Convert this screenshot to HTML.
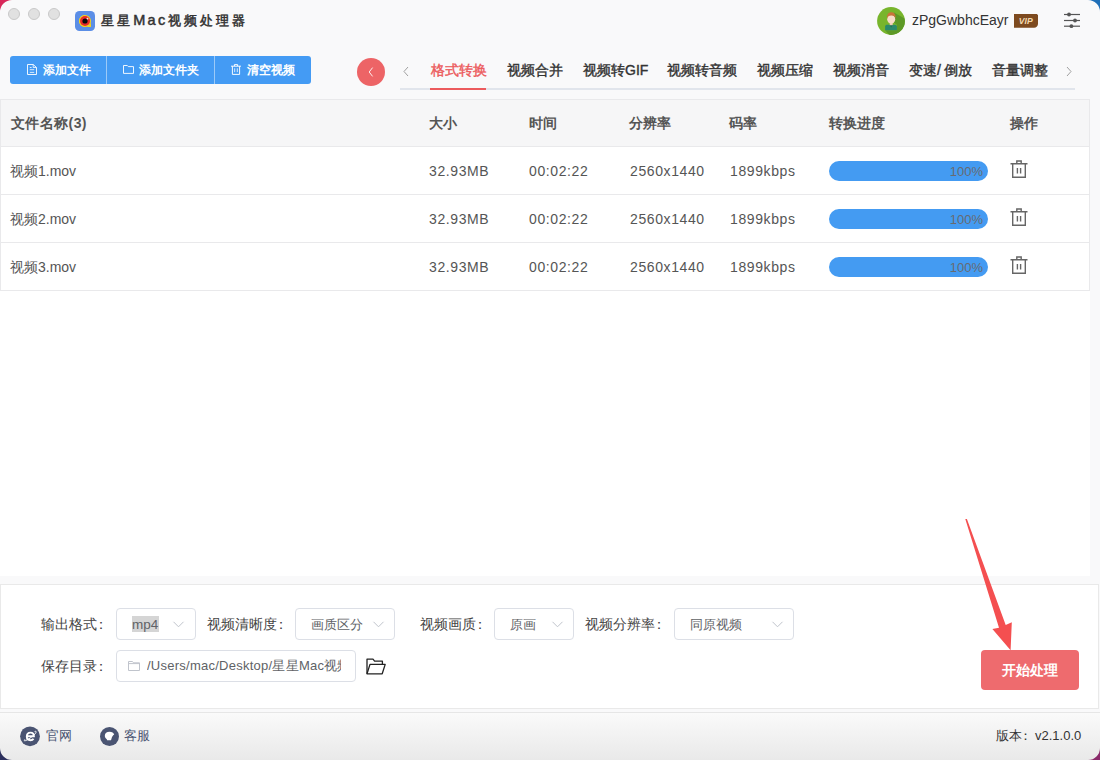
<!DOCTYPE html>
<html><head><meta charset="utf-8">
<style>
*{margin:0;padding:0;box-sizing:border-box;}
html,body{width:1100px;height:760px;overflow:hidden;background:#f9f9fa;}
body{font-family:"Liberation Sans",sans-serif;position:relative;color:#333;}
.abs{position:absolute;}
svg{position:absolute;display:block;overflow:visible;}
.win{position:absolute;left:0;top:0;width:1100px;height:760px;background:#f9f9fa;overflow:hidden;}
.tl{position:absolute;top:8px;width:12px;height:12px;border-radius:50%;background:#e1e1e1;border:1px solid #c9c9c9;}
.t{position:absolute;white-space:nowrap;line-height:20px;}
.title{left:101px;top:10px;font-size:13px;letter-spacing:3.1px;color:#333;-webkit-text-stroke:0.5px;}
.btngrp{position:absolute;left:10px;top:56px;width:301px;height:28px;background:#449bf4;border-radius:3px;}
.btn{position:absolute;top:4px;color:#fff;font-size:12px;font-weight:bold;line-height:20px;white-space:nowrap;}
.sep{position:absolute;top:0;width:1px;height:28px;background:#9ccaf8;}
.tab{position:absolute;top:60px;font-size:14px;color:#333;-webkit-text-stroke:0.4px;line-height:20px;white-space:nowrap;}
.hdr{position:absolute;top:99px;left:0;width:1090px;height:48px;background:#f6f6f7;border:1px solid #e9e9eb;}
.row{position:absolute;left:0;width:1090px;height:48px;background:#fff;border-left:1px solid #e9e9eb;border-right:1px solid #e9e9eb;border-bottom:1px solid #e9e9eb;}
.cell{position:absolute;top:14px;font-size:14px;line-height:20px;color:#555;white-space:nowrap;}
.num{letter-spacing:0.6px;}
.hcell{position:absolute;top:13px;font-size:14px;font-weight:bold;line-height:20px;color:#555;white-space:nowrap;}
.prog{position:absolute;left:828px;top:14px;width:159px;height:20px;border-radius:10px;background:#449bf2;}
.prog span{position:absolute;right:5px;top:1.5px;font-size:13px;line-height:18px;color:#676b72;}
.lbl{position:absolute;font-size:14px;color:#444;line-height:20px;white-space:nowrap;}
.sel{position:absolute;height:32px;border:1px solid #dcdfe6;border-radius:4px;background:#fff;}
.sel span{position:absolute;left:15px;top:6px;font-size:13px;color:#606266;line-height:20px;white-space:nowrap;}
</style></head>
<body>
<div class="win">
  <!-- traffic lights -->
  <div class="tl" style="left:8px"></div>
  <div class="tl" style="left:28px"></div>
  <div class="tl" style="left:48px"></div>

  <!-- app icon -->
  <svg style="left:75px;top:11px" width="20" height="20" viewBox="0 0 20 20">
    <rect x="0" y="0" width="20" height="20" rx="4.5" fill="#5b8ee6"/>
    <path d="M10 4A6 6 0 1 0 16 10V16H10Z" fill="#f3d21c"/>
    <circle cx="10" cy="10" r="6" fill="#f3d21c"/>
    <circle cx="10" cy="10" r="5" fill="#e82a2a"/>
    <circle cx="10" cy="10" r="2.6" fill="#0a0a0a"/>
    <circle cx="12.5" cy="7.6" r="0.9" fill="#f0f0f0"/>
  </svg>
  <div class="t title">星星<span style="font-size:14.5px;letter-spacing:2.3px">Mac</span>视频处理器</div>

  <!-- right header -->
  <svg style="left:877px;top:7px" width="28" height="28" viewBox="0 0 28 28">
    <defs><clipPath id="avc"><circle cx="14" cy="14" r="13.9"/></clipPath></defs>
    <circle cx="14" cy="14" r="13.9" fill="#78b52c"/>
    <g clip-path="url(#avc)">
      <path d="M17 5.5L30 13L30 30L14 30L8.2 23.3H19.9V17.8L16 15Z" fill="#5d9926"/>
      <path d="M8.1 23.3V19.4C8.1 18.4 9 17.8 10.5 17.8H17.5C19 17.8 19.9 18.4 19.9 19.4V23.3Z" fill="#2a8a6c"/>
      <path d="M12.4 17.8L14.2 20.4L16 17.8Z" fill="#1f6f57"/>
      <rect x="12.7" y="15" width="3" height="3.2" fill="#f0cdb2"/>
      <ellipse cx="14.2" cy="12.2" rx="4" ry="4.4" fill="#f8dcc8"/>
      <path d="M10 11.5C9.6 7.2 11.6 5.2 14.3 5.2C17 5.2 19 7.2 18.6 11.5C18 9.6 16.8 8.6 14.3 8.6C11.8 8.6 10.6 9.6 10 11.5Z" fill="#c8743a"/>
    </g>
  </svg>
  <div class="t" style="left:912px;top:10px;font-size:14px;color:#333;">zPgGwbhcEayr</div>
  <svg style="left:1014px;top:14px" width="25" height="14" viewBox="0 0 25 14">
    <path d="M0 0H23.5L24 1V9.5A4 4 0 0 1 20 13.8H0Z" fill="#7d4a1f"/>
    <path d="M23 0H25V2Z" fill="#f9f9fa"/>
    <text x="11.8" y="10.2" text-anchor="middle" font-family="Liberation Sans" font-size="8.6" font-weight="bold" font-style="italic" fill="#f5dcb0">VIP</text>
  </svg>
  <svg style="left:1063px;top:11px" width="18" height="18" viewBox="0 0 18 18">
    <g stroke="#555" stroke-width="1.2" fill="#555">
      <line x1="1" y1="3.5" x2="17" y2="3.5"/><circle cx="6" cy="3.5" r="1.9" stroke="none"/>
      <line x1="1" y1="9.5" x2="17" y2="9.5"/><circle cx="12" cy="9.5" r="1.9" stroke="none"/>
      <line x1="1" y1="15.2" x2="17" y2="15.2"/><circle cx="8.4" cy="15.2" r="1.9" stroke="none"/>
    </g>
  </svg>

  <!-- toolbar -->
  <div class="btngrp">
    <svg style="left:17px;top:8px" width="10" height="11" viewBox="0 0 10 11">
      <path d="M0.5 0.5H6.2L9.5 3.5V10.5H0.5Z" fill="none" stroke="#fff" stroke-width="0.9" stroke-linejoin="round"/>
      <path d="M6.2 0.6V3.5H9.4" fill="none" stroke="#fff" stroke-width="0.8"/>
      <path d="M2.8 3.5H4.6M2.8 5.7H7.2M2.8 8.4H7.2" stroke="#fff" stroke-width="0.8"/>
    </svg>
    <div class="btn" style="left:33px">添加文件</div>
    <div class="sep" style="left:96px"></div>
    <svg style="left:113px;top:9px" width="11" height="9" viewBox="0 0 11 9">
      <path d="M0.5 0.5H4.3L5.3 1.6H10.5V8.4H0.5Z" fill="none" stroke="#fff" stroke-width="0.9" stroke-linejoin="round"/>
    </svg>
    <div class="btn" style="left:129px">添加文件夹</div>
    <div class="sep" style="left:204px"></div>
    <svg style="left:221px;top:8px" width="10" height="11" viewBox="0 0 10 11">
      <path d="M0 2.2H10M3.4 2.2V0.6H6.6V2.2M1.4 2.2V10.4H8.6V2.2" fill="none" stroke="#fff" stroke-width="0.95"/><path d="M3.7 4.3V8.1M6.3 4.3V8.1" fill="none" stroke="#fff" stroke-width="0.8"/>
    </svg>
    <div class="btn" style="left:237px">清空视频</div>
  </div>

  <!-- back circle -->
  <svg style="left:357px;top:58px" width="28" height="28" viewBox="0 0 28 28">
    <circle cx="14" cy="14" r="14" fill="#ed6466"/>
    <path d="M15.6 9.6L12.2 14L15.6 18.4" fill="none" stroke="#fff" stroke-width="0.9"/>
  </svg>
  <svg style="left:402px;top:66px" width="8" height="11" viewBox="0 0 8 11">
    <path d="M6 1L2 5.5L6 10" fill="none" stroke="#a0a0a0" stroke-width="1"/>
  </svg>
  <svg style="left:1065px;top:66px" width="8" height="11" viewBox="0 0 8 11">
    <path d="M2 1L6 5.5L2 10" fill="none" stroke="#a0a0a0" stroke-width="1"/>
  </svg>

  <div class="tab" style="left:431px;color:#ec5b5d">格式转换</div>
  <div class="tab" style="left:507px">视频合并</div>
  <div class="tab" style="left:583px">视频转GIF</div>
  <div class="tab" style="left:667px">视频转音频</div>
  <div class="tab" style="left:757px">视频压缩</div>
  <div class="tab" style="left:833px">视频消音</div>
  <div class="tab" style="left:909px">变速<span style="margin-right:3px">/</span>倒放</div>
  <div class="tab" style="left:992px">音量调整</div>
  <div class="abs" style="left:400px;top:88px;width:675px;height:2px;background:#e1e5ec;"></div>
  <div class="abs" style="left:430px;top:88px;width:56px;height:2px;background:#ec5b5d;"></div>

  <!-- table -->
  <div class="hdr">
    <div class="hcell" style="left:10px;letter-spacing:0.4px">文件名称(3)</div>
    <div class="hcell" style="left:428px">大小</div>
    <div class="hcell" style="left:528px">时间</div>
    <div class="hcell" style="left:628px">分辨率</div>
    <div class="hcell" style="left:728px">码率</div>
    <div class="hcell" style="left:828px">转换进度</div>
    <div class="hcell" style="left:1009px">操作</div>
  </div>
  <div class="row" style="top:147px">
    <div class="cell" style="left:9px">视频1.mov</div>
    <div class="cell num" style="left:428px">32.93MB</div>
    <div class="cell num" style="left:528px">00:02:22</div>
    <div class="cell num" style="left:629px">2560x1440</div>
    <div class="cell num" style="left:729px">1899kbps</div>
    <div class="prog"><span>100%</span></div>
    <svg style="left:1009px;top:12.5px" width="18" height="18" viewBox="0 0 18 18">
      <path d="M0.5 3.8H17.5M6.8 3.8V1H11.2V3.8M2.7 3.8V17.2H15.3V3.8M7.4 8V13.4M10.6 8V13.4" fill="none" stroke="#666" stroke-width="1.4"/>
    </svg>
  </div>
  <div class="row" style="top:195px">
    <div class="cell" style="left:9px">视频2.mov</div>
    <div class="cell num" style="left:428px">32.93MB</div>
    <div class="cell num" style="left:528px">00:02:22</div>
    <div class="cell num" style="left:629px">2560x1440</div>
    <div class="cell num" style="left:729px">1899kbps</div>
    <div class="prog"><span>100%</span></div>
    <svg style="left:1009px;top:12.5px" width="18" height="18" viewBox="0 0 18 18">
      <path d="M0.5 3.8H17.5M6.8 3.8V1H11.2V3.8M2.7 3.8V17.2H15.3V3.8M7.4 8V13.4M10.6 8V13.4" fill="none" stroke="#666" stroke-width="1.4"/>
    </svg>
  </div>
  <div class="row" style="top:243px">
    <div class="cell" style="left:9px">视频3.mov</div>
    <div class="cell num" style="left:428px">32.93MB</div>
    <div class="cell num" style="left:528px">00:02:22</div>
    <div class="cell num" style="left:629px">2560x1440</div>
    <div class="cell num" style="left:729px">1899kbps</div>
    <div class="prog"><span>100%</span></div>
    <svg style="left:1009px;top:12.5px" width="18" height="18" viewBox="0 0 18 18">
      <path d="M0.5 3.8H17.5M6.8 3.8V1H11.2V3.8M2.7 3.8V17.2H15.3V3.8M7.4 8V13.4M10.6 8V13.4" fill="none" stroke="#666" stroke-width="1.4"/>
    </svg>
  </div>
  <div class="abs" style="left:0;top:291px;width:1090px;height:285px;background:#fff;"></div>

  <!-- bottom panel -->
  <div class="abs" style="left:0;top:584px;width:1099px;height:125px;background:#fff;border:1px solid #e9e9e9;"></div>
  <div class="abs" style="left:0;top:712px;width:1100px;height:1px;background:#e6e6e6;"></div>
  <div class="lbl" style="left:41px;top:614px">输出格式<span style="margin-left:-3px">：</span></div>
  <div class="sel" style="left:116px;top:608px;width:80px;">
    <div class="abs" style="left:15px;top:7px;width:27px;height:16px;background:#d5d5d5;"></div>
    <span style="top:6px;font-size:13.5px">mp4</span>
    <svg style="left:56px;top:12px" width="11" height="7" viewBox="0 0 11 7"><path d="M0.5 0.8L5.5 5.8L10.5 0.8" fill="none" stroke="#c0c4cc" stroke-width="1"/></svg>
  </div>
  <div class="lbl" style="left:207px;top:614px">视频清晰度<span style="margin-left:-3px">：</span></div>
  <div class="sel" style="left:295px;top:608px;width:100px;"><span>画质区分</span>
    <svg style="left:76.5px;top:12px" width="11" height="7" viewBox="0 0 11 7"><path d="M0.5 0.8L5.5 5.8L10.5 0.8" fill="none" stroke="#c0c4cc" stroke-width="1"/></svg>
  </div>
  <div class="lbl" style="left:420px;top:614px">视频画质<span style="margin-left:-3px">：</span></div>
  <div class="sel" style="left:494px;top:608px;width:80px;"><span>原画</span>
    <svg style="left:57px;top:12px" width="11" height="7" viewBox="0 0 11 7"><path d="M0.5 0.8L5.5 5.8L10.5 0.8" fill="none" stroke="#c0c4cc" stroke-width="1"/></svg>
  </div>
  <div class="lbl" style="left:585px;top:614px">视频分辨率<span style="margin-left:-3px">：</span></div>
  <div class="sel" style="left:674px;top:608px;width:120px;"><span>同原视频</span>
    <svg style="left:97px;top:12px" width="11" height="7" viewBox="0 0 11 7"><path d="M0.5 0.8L5.5 5.8L10.5 0.8" fill="none" stroke="#c0c4cc" stroke-width="1"/></svg>
  </div>
  <div class="lbl" style="left:41px;top:656px">保存目录<span style="margin-left:-3px">：</span></div>
  <div class="sel" style="left:116px;top:650px;width:240px;height:32px;overflow:hidden;">
    <svg style="left:11px;top:10px" width="12" height="10" viewBox="0 0 12 10"><path d="M0.5 0.5H4.5L5.5 1.8H11.5V9.5H0.5Z M0.5 2.6H11.5" fill="none" stroke="#c0c4cc" stroke-width="1"/></svg>
    <div class="abs" style="left:30px;top:5px;width:194px;height:20px;overflow:hidden;"><span style="left:0;top:0;letter-spacing:0.25px">/Users/mac/Desktop/星星Mac视频处理器</span></div>
  </div>
  <svg style="left:366px;top:658px" width="20" height="17" viewBox="0 0 20 17">
    <path d="M1 15.8V1.2H7L8.6 3.2H16.4V6.2" fill="none" stroke="#222" stroke-width="1.3" stroke-linejoin="round"/>
    <path d="M1 15.8L4 6.4H19.2L16.2 15.8Z" fill="none" stroke="#222" stroke-width="1.3" stroke-linejoin="round"/>
  </svg>
  <div class="abs" style="left:981px;top:650px;width:98px;height:40px;border-radius:4px;background:#ee6b6e;"></div>
  <div class="t" style="left:1002px;top:660px;font-size:14px;font-weight:bold;color:#fff;">开始处理</div>
  <!-- red arrow -->
  <svg style="left:960px;top:515px" width="60" height="140" viewBox="0 0 60 140">
    <path d="M5.3 4L6.9 4L45.7 110L51.8 107.2L50.6 135.2L32.4 114.1L39 112.8Z" fill="#f44f50"/>
  </svg>

  <!-- footer -->
  <div class="abs" style="left:0;top:713px;width:1100px;height:47px;background:linear-gradient(#fafafa,#e9e9e9);"></div>
  <svg style="left:20px;top:726px" width="20" height="20" viewBox="0 0 20 20">
    <circle cx="10" cy="10.3" r="9.9" fill="#4a5472"/>
    <path d="M7.2 10.2H13.9C13.9 7.9 12.5 6.6 10.6 6.6C8.4 6.6 6.8 8.3 6.8 10.6C6.8 12.9 8.4 14.3 10.5 14.3C11.9 14.3 12.9 13.7 13.5 12.7" fill="none" stroke="#fff" stroke-width="1.9"/>
    <path d="M14.6 5.6C16.6 4.6 16.8 6.2 14.4 8.6C12 11 8 13.6 5.6 14.6C4.2 15.2 4 14.6 4.8 13.4" fill="none" stroke="#fff" stroke-width="1"/>
  </svg>
  <div class="t" style="left:46px;top:726px;font-size:13px;color:#4a5472;">官网</div>
  <svg style="left:100px;top:727px" width="19" height="19" viewBox="0 0 19 19">
    <circle cx="9.5" cy="9.5" r="9.5" fill="#4a5472"/>
    <path d="M4.8 8.8C4.8 6.3 6.8 4.8 9.5 4.8C11.9 4.8 13.8 5.9 14.2 7.6C13.2 8.2 12 9.4 11.4 12L11 13.3H7.1L6.8 12.2C5.6 11.4 4.8 10.2 4.8 8.8Z" fill="#fff"/>
  </svg>
  <div class="t" style="left:124px;top:726px;font-size:13px;color:#4a5472;">客服</div>
  <div class="t" style="left:996px;top:726px;font-size:13px;color:#333">版本<span style="margin-left:-3px;margin-right:3px">：</span>v2.1.0.0</div>
  <!-- window corners (desktop behind) -->
  <svg style="left:0;top:0" width="12" height="12"><path d="M0 0H12A12 12 0 0 0 0 12Z" fill="#d8285a"/></svg>
  <svg style="left:1088px;top:0" width="12" height="12"><path d="M12 0H0A12 12 0 0 1 12 12Z" fill="#1f6fb8"/></svg>
  <svg style="left:0;top:748px" width="12" height="12"><path d="M0 12H12A12 12 0 0 1 0 0Z" fill="#2b2f5c"/></svg>
  <svg style="left:1088px;top:748px" width="12" height="12"><path d="M12 12H0A12 12 0 0 0 12 0Z" fill="#8a2a6a"/></svg>

</div>
</body></html>
